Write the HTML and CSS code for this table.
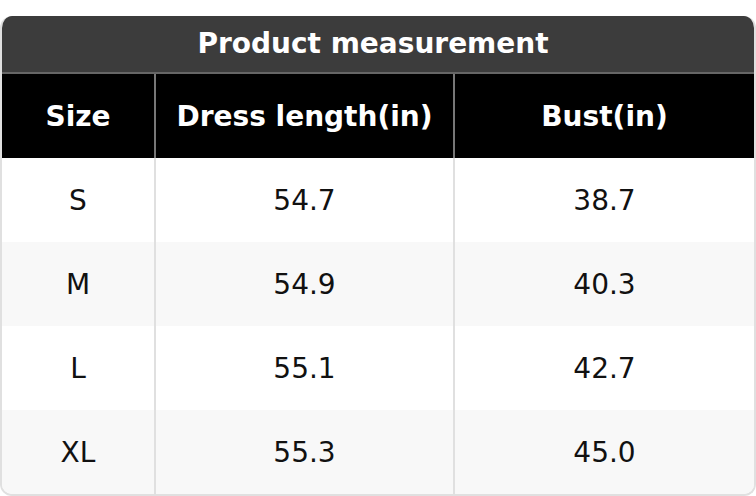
FILE: index.html
```html
<!DOCTYPE html>
<html>
<head>
<meta charset="utf-8">
<link rel="stylesheet" href="styles.css">
</head>
<body>
<div class="card">
  <div class="title">Product measurement</div>
  <table class="sizes">
    <thead>
      <tr><th class="c1">Size</th><th class="c2">Dress length(in)</th><th class="c3">Bust(in)</th></tr>
    </thead>
    <tbody>
      <tr><td>S</td><td>54.7</td><td>38.7</td></tr>
      <tr><td>M</td><td>54.9</td><td>40.3</td></tr>
      <tr><td>L</td><td>55.1</td><td>42.7</td></tr>
      <tr><td>XL</td><td>55.3</td><td>45.0</td></tr>
    </tbody>
  </table>
</div>
</body>
</html>
```
FILE: styles.css
```css
html, body { margin: 0; padding: 0; background: #fff; }
body { padding-top: 16px; font-family: "DejaVu Sans", sans-serif; }
.card {
  width: 756px;
  box-sizing: border-box;
  border: 2px solid #e0e0e0;
  border-top: none;
  border-radius: 12px;
  overflow: hidden;
}
.title {
  height: 58px;
  padding-right: 10px;
  padding-bottom: 2px;
  box-sizing: border-box;
  background: #3c3c3c;
  color: #fff;
  font-weight: bold;
  font-size: 28px;
  display: flex;
  align-items: center;
  justify-content: center;
  border-bottom: 2px solid #666;
}
.sizes {
  width: 100%;
  border-collapse: collapse;
  table-layout: fixed;
}
.sizes th, .sizes td {
  text-align: center;
  height: 84px;
  padding: 0;
  font-size: 28px;
}
.sizes th {
  background: #000;
  color: #fff;
  font-weight: bold;
  border-left: 2px solid #777;
}
.sizes th:first-child, .sizes td:first-child { border-left: none; }
.c1 { width: 152px; }
.c2 { width: 297px; }
.sizes td {
  color: #111;
  border-left: 2px solid #e0e0e0;
}
.sizes tbody tr:nth-child(even) td { background: #f8f8f8; }
```
